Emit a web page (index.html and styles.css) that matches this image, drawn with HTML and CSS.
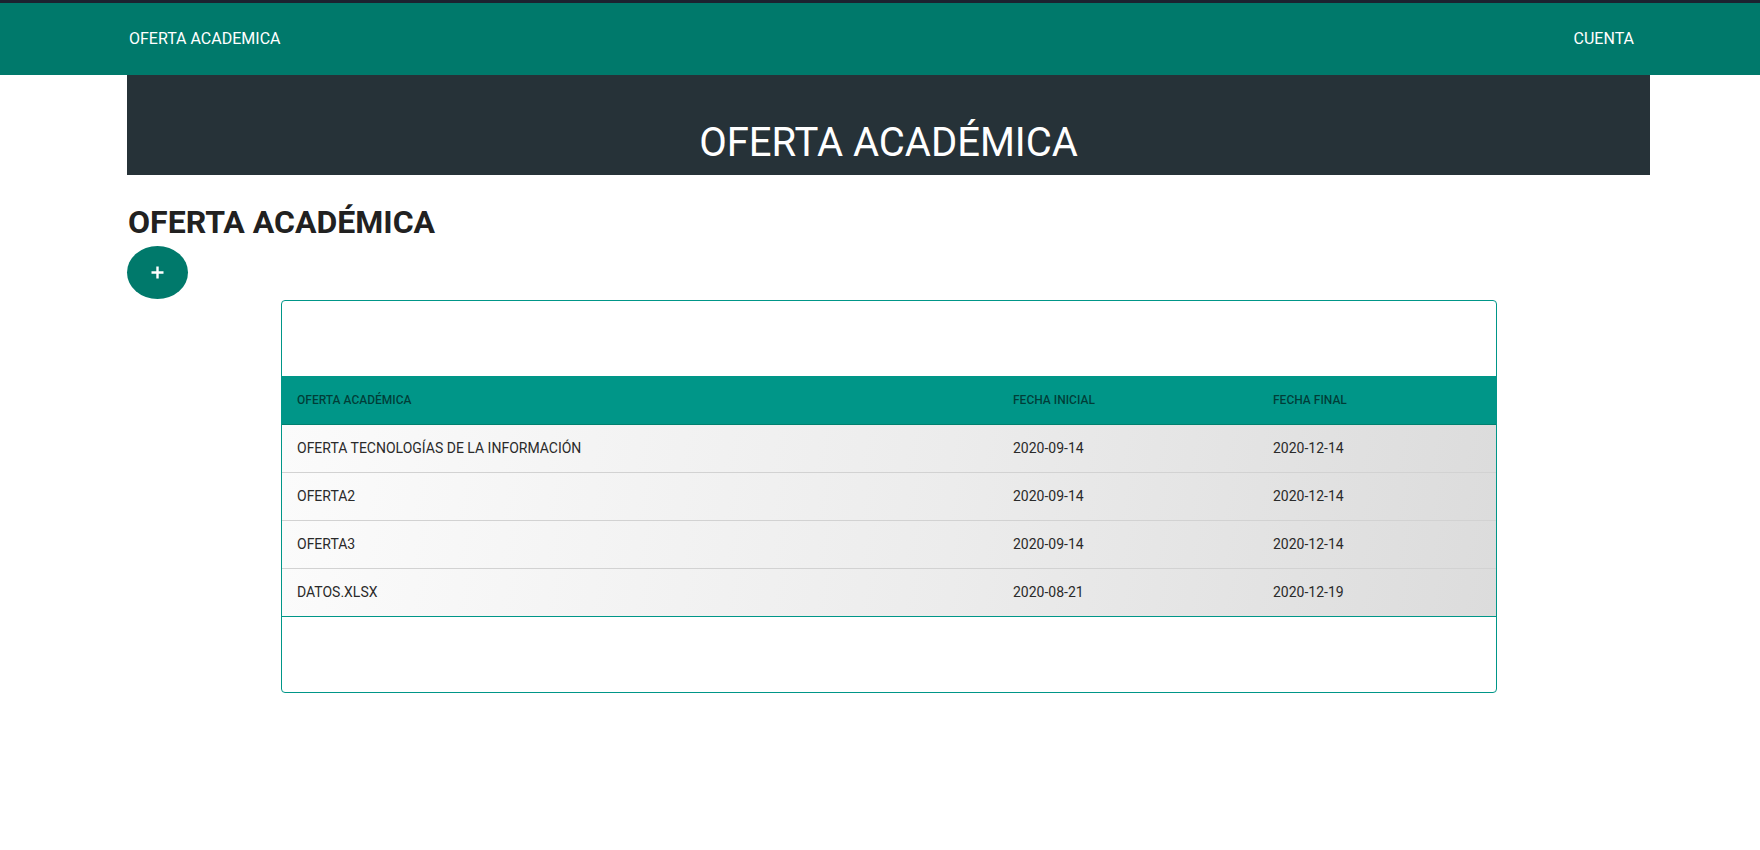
FILE: index.html
```html
<!DOCTYPE html>
<html lang="es">
<head>
<meta charset="utf-8">
<title>Oferta Académica</title>
<link rel="stylesheet" href="styles.css">
</head>
<body>
<nav class="navbar">
  <a class="nav-brand" href="#">OFERTA ACADEMICA</a>
  <a class="nav-link" href="#">CUENTA</a>
</nav>
<main class="container">
  <header class="hero">
    <h1 class="hero-title">OFERTA ACADÉMICA</h1>
  </header>
  <h2 class="page-title">OFERTA ACADÉMICA</h2>
  <button class="fab" type="button" aria-label="Agregar">
    <svg width="13" height="13" viewBox="0 0 13 13"><path d="M6.5 0.5v12M0.5 6.5h12" stroke="#fff" stroke-width="2.4" fill="none"/></svg>
  </button>
  <section class="card">
    <div class="card-pad"></div>
    <table class="data-table">
      <colgroup>
        <col class="col-name">
        <col class="col-start">
        <col class="col-end">
      </colgroup>
      <thead>
        <tr><th>OFERTA ACADÉMICA</th><th>FECHA INICIAL</th><th>FECHA FINAL</th></tr>
      </thead>
      <tbody>
        <tr><td>OFERTA TECNOLOGÍAS DE LA INFORMACIÓN</td><td>2020-09-14</td><td>2020-12-14</td></tr>
        <tr><td>OFERTA2</td><td>2020-09-14</td><td>2020-12-14</td></tr>
        <tr><td>OFERTA3</td><td>2020-09-14</td><td>2020-12-14</td></tr>
        <tr><td>DATOS.XLSX</td><td>2020-08-21</td><td>2020-12-19</td></tr>
      </tbody>
    </table>
    <div class="card-pad"></div>
  </section>
</main>
</body>
</html>
```
FILE: styles.css
```css
* { box-sizing: border-box; }
html, body { margin: 0; padding: 0; background: #fff; }
body {
  font-family: Roboto, "Liberation Sans", Arial, sans-serif;
  color: #212121;
}
.navbar {
  height: 75px;
  border-top: 3px solid #1c2230;
  background: #00796b;
  display: flex;
  justify-content: space-between;
  align-items: center;
  padding: 0 126px 0 129px;
}
.nav-brand, .nav-link {
  color: #fff;
  text-decoration: none;
  font-size: 16px;
  line-height: 72px;
}
.container {
  margin: 0 110px 0 127px;
}
.hero {
  height: 100px;
  background: #263238;
  display: flex;
  align-items: flex-end;
  justify-content: center;
  padding-bottom: 8px;
}
.hero-title {
  margin: 0;
  color: #fff;
  font-size: 40px;
  font-weight: 400;
  line-height: 1.2;
}
.page-title {
  margin: 28px 0 5px 1px;
  font-size: 32px;
  font-weight: 700;
  line-height: 1.2;
  color: #212121;
}
.fab {
  display: flex;
  align-items: center;
  justify-content: center;
  width: 61px;
  height: 53px;
  border: none;
  border-radius: 50%;
  background: #00796b;
  padding: 0;
  margin: 0;
  cursor: pointer;
}
.card {
  width: 1216px;
  margin: 1px 0 0 154px;
  border: 1px solid #009688;
  border-radius: 4px;
  overflow: hidden;
}
.card-pad { height: 75px; }
.data-table {
  width: 100%;
  border-collapse: collapse;
  table-layout: fixed;
}
.col-name { width: 716px; }
.col-start { width: 260px; }
.data-table th {
  height: 48px;
  background: #009688;
  color: rgba(0, 0, 0, 0.6);
  font-size: 12px;
  font-weight: 500;
  text-align: left;
  padding: 0 15px;
  border-bottom: 1px solid #00806f;
}
.data-table tbody tr {
  background: linear-gradient(100deg, #fbfbfb 0%, #ececec 55%, #dcdcdc 100%);
}
.data-table td {
  height: 48px;
  padding: 0 15px;
  font-size: 14px;
  color: #2a2a2a;
  border-bottom: 1px solid #d2d2d2;
}
.data-table tbody tr:last-child td {
  border-bottom: 1px solid #009688;
}
```
